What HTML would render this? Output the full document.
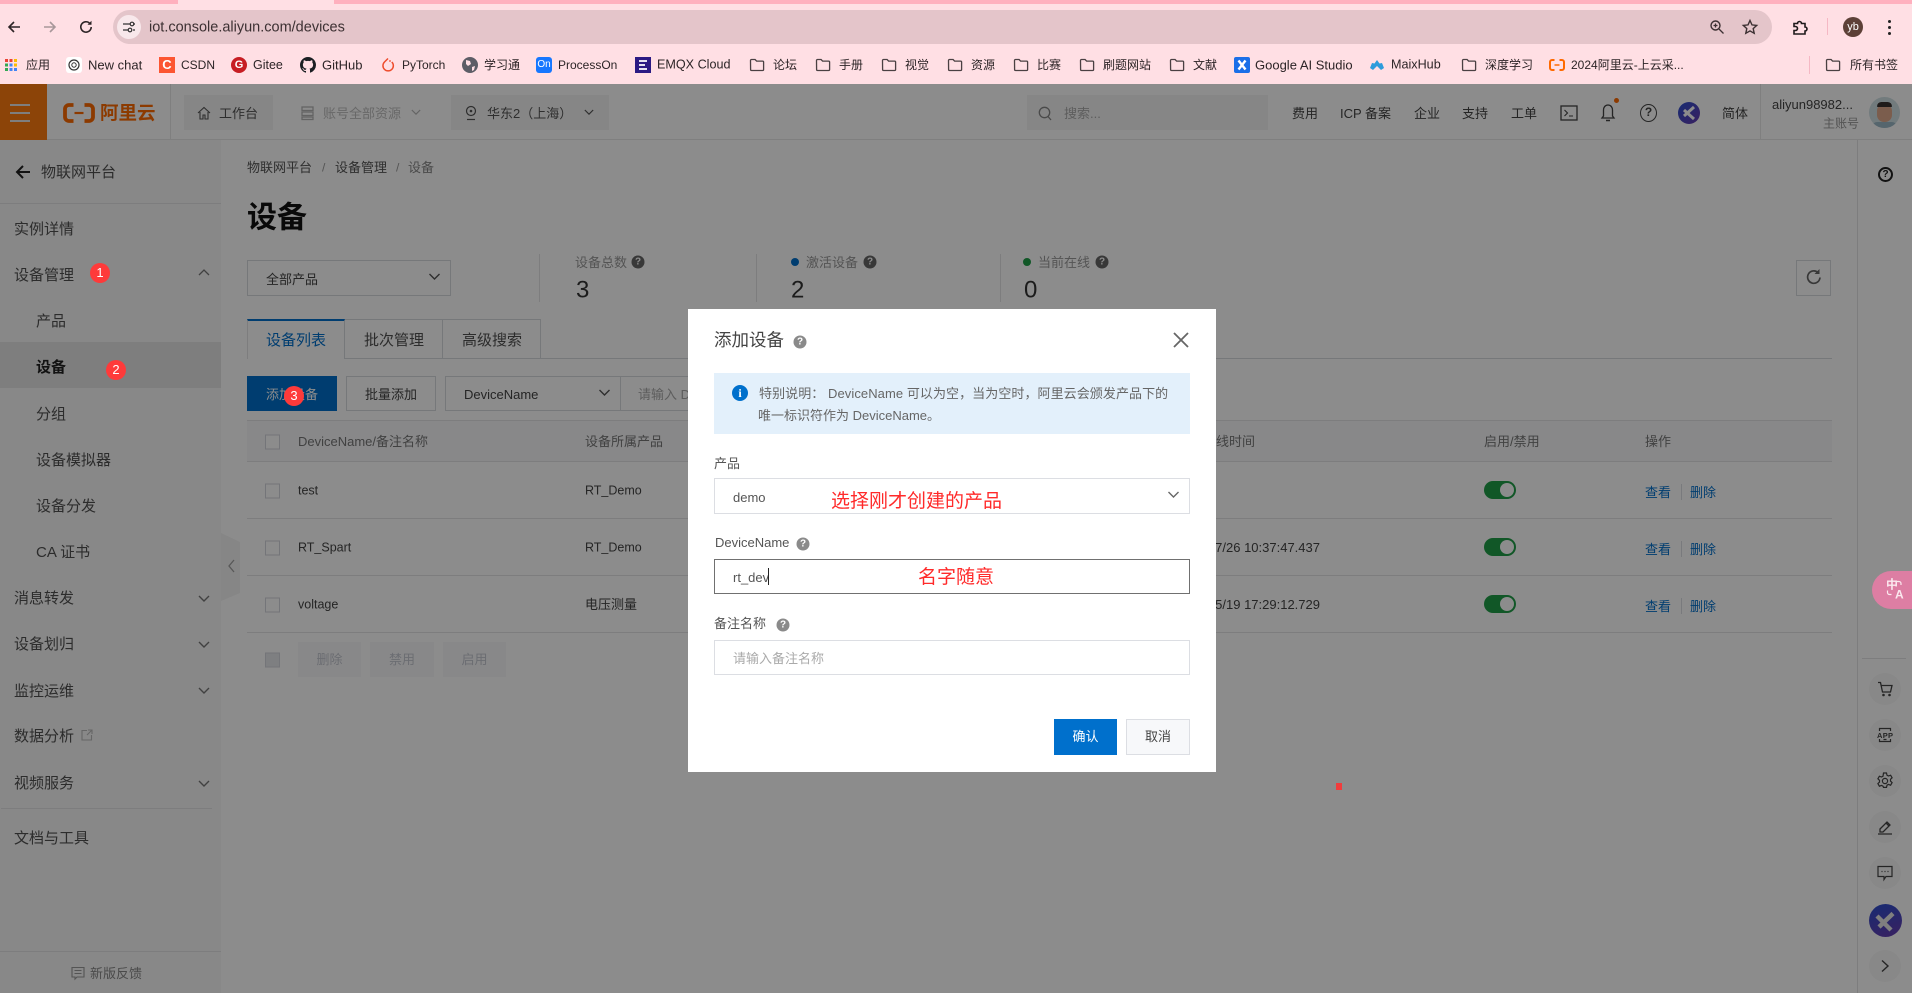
<!DOCTYPE html>
<html lang="zh-CN">
<head>
<meta charset="utf-8">
<title>设备</title>
<style>
html,body{margin:0;padding:0;width:1912px;height:993px;overflow:hidden;background:#fff}
body{position:relative;font-family:"Liberation Sans","Noto Sans CJK SC",sans-serif;font-size:13px;color:#333}
.a{position:absolute;box-sizing:border-box}
.t{position:absolute;white-space:nowrap;line-height:1;transform:translateY(calc(-50% + .5px))}
svg{position:absolute;display:block;overflow:visible}
.bm{font-size:12px;color:#2c2426;transform:translateY(-50%)}
.s{font-size:15px;color:#505050}
.h{font-size:13px;color:#444}
.q{position:absolute;width:13px;height:13px;border-radius:50%;background:#8a8a8a;color:#fff;font-size:10px;font-weight:bold;line-height:13px;text-align:center;transform:translate(-50%,-50%)}
.badge{position:absolute;width:20px;height:20px;border-radius:50%;background:#fe3a3a;color:#fff;font-size:13px;line-height:20px;text-align:center;transform:translate(-50%,-50%);z-index:5}
.cb{position:absolute;left:265px;width:15px;height:15px;border:1px solid #d4d6dc;background:#fff;box-sizing:border-box;transform:translateY(-50%)}
.sw{position:absolute;left:1484px;width:32px;height:18px;border-radius:9px;background:#1f9e48;transform:translateY(-50%)}
.sw i{position:absolute;right:2px;top:2px;width:14px;height:14px;border-radius:50%;background:#fff}
.line{position:absolute;left:247px;width:1585px;height:1px;background:#e3e4e6}
.link{color:#0070cc;font-size:13px}
.rc{position:absolute;left:1869px;width:32px;height:32px;border-radius:50%;background:#f8f8f8}
.dis{position:absolute;top:642px;height:35px;background:#f7f8fa;color:#c4c6cf;text-align:center;line-height:35px;font-size:13px}
</style>
</head>
<body>
<svg width="0" height="0" style="position:absolute"><defs>
<symbol id="folder" viewBox="0 0 16 16"><path d="M1.500 3.500a1 1 0 0 1 1-1h3.600l1.500 1.600h6a1 1 0 0 1 1 1v7.400a1 1 0 0 1-1 1h-11a1 1 0 0 1-1-1z" fill="none" stroke="#4a4042" stroke-width="1.300"/></symbol>
<symbol id="chev" viewBox="0 0 12 8"><path d="M1 1l5 5 5-5" fill="none" stroke="currentColor" stroke-width="1.400"/></symbol>
</defs></svg>

<!-- Chrome tab strip -->
<div class="a" style="left:0;top:0;width:1912px;height:4px;background:#ffb0be"></div>
<div class="a" style="left:178px;top:0;width:156px;height:4px;background:#ffdfe4"></div>
<div class="a" style="left:0;top:4px;width:1912px;height:80px;background:#ffdfe4"></div>
<div class="a" style="left:113px;top:10px;width:1659px;height:34px;border-radius:17px;background:#e4c5ca"></div>
<svg style="left:6px;top:19px" width="16" height="16" viewBox="0 0 16 16"><path d="M14 8H3M8 3L3 8l5 5" fill="none" stroke="#2d2426" stroke-width="1.600"/></svg>
<svg style="left:42px;top:19px" width="16" height="16" viewBox="0 0 16 16"><path d="M2 8h11M8 3l5 5-5 5" fill="none" stroke="#a8979a" stroke-width="1.600"/></svg>
<svg style="left:78px;top:19px" width="16" height="16" viewBox="0 0 16 16"><path d="M13.200 8a5.200 5.200 0 1 1-1.600-3.800" fill="none" stroke="#2d2426" stroke-width="1.600"/><path d="M13.500 1.800v4h-4z" fill="#2d2426"/></svg>
<div class="a" style="left:117px;top:15px;width:24px;height:24px;border-radius:50%;background:#f8e8eb"></div>
<svg style="left:122px;top:20px" width="14" height="14" viewBox="0 0 14 14"><path d="M1 4h7M11 10h2M1 10h5M12 4h1" stroke="#333" stroke-width="1.300" fill="none"/><circle cx="10" cy="4" r="1.800" fill="none" stroke="#333" stroke-width="1.200"/><circle cx="8" cy="10" r="1.800" fill="none" stroke="#333" stroke-width="1.200"/></svg>
<div class="t" style="left:149px;top:27px;font-size:14.500px;color:#3c3032">iot.console.aliyun.com/devices</div>
<svg style="left:1709px;top:19px" width="16" height="16" viewBox="0 0 16 16"><circle cx="6.500" cy="6.500" r="4.500" fill="none" stroke="#3c3032" stroke-width="1.400"/><path d="M10 10l4.500 4.500M4.500 6.500h4M6.500 4.500v4" stroke="#3c3032" stroke-width="1.300" fill="none"/></svg>
<svg style="left:1742px;top:19px" width="16" height="16" viewBox="0 0 16 16"><path d="M8 1.500l2 4.400 4.700.5-3.500 3.200 1 4.700L8 11.900l-4.200 2.400 1-4.700L1.300 6.400 6 5.900z" fill="none" stroke="#3c3032" stroke-width="1.400"/></svg>
<svg style="left:1792px;top:19px" width="16" height="16" viewBox="0 0 16 16"><path d="M2 4.500h3.500a2 2 0 0 1 4 0H13v3.500a2 2 0 0 1 0 4V15H2v-3.500h1.500a2 2 0 0 0 0-4H2z" fill="none" stroke="#1f1a1b" stroke-width="1.600"/></svg>
<div class="a" style="left:1827px;top:18px;width:1px;height:17px;background:#f5b8c4"></div>
<div class="a" style="left:1843px;top:17px;width:20px;height:20px;border-radius:50%;background:#5d4037;color:#fff;font-size:11px;line-height:20px;text-align:center">yb</div>
<div class="a" style="left:1888px;top:20px;width:3px;height:3px;border-radius:50%;background:#222"></div>
<div class="a" style="left:1888px;top:26px;width:3px;height:3px;border-radius:50%;background:#222"></div>
<div class="a" style="left:1888px;top:32px;width:3px;height:3px;border-radius:50%;background:#222"></div>

<!-- Bookmarks -->
<svg style="left:5px;top:59px" width="12" height="12" viewBox="0 0 12 12"><g><rect width="3" height="3" fill="#ea4335"/><rect x="4.500" width="3" height="3" fill="#ea4335"/><rect x="9" width="3" height="3" fill="#fbbc04"/><rect y="4.500" width="3" height="3" fill="#34a853"/><rect x="4.500" y="4.500" width="3" height="3" fill="#4285f4"/><rect x="9" y="4.500" width="3" height="3" fill="#fbbc04"/><rect y="9" width="3" height="3" fill="#34a853"/><rect x="4.500" y="9" width="3" height="3" fill="#4285f4"/><rect x="9" y="9" width="3" height="3" fill="#4285f4"/></g></svg>
<div class="t bm" style="left:26px;top:65px">应用</div>
<div class="a" style="left:66px;top:57px;width:16px;height:16px;background:#fff;border-radius:3px"></div>
<svg style="left:68px;top:59px" width="12" height="12" viewBox="0 0 12 12"><circle cx="6" cy="6" r="5" fill="none" stroke="#333" stroke-width="1.200"/><circle cx="6" cy="6" r="2.200" fill="none" stroke="#333" stroke-width="1"/></svg>
<div class="t bm" style="left:88px;top:65px;font-size:13px">New chat</div>
<div class="a" style="left:159px;top:57px;width:16px;height:16px;background:#fc5531;color:#fff;font-size:13px;font-weight:bold;line-height:16px;text-align:center">C</div>
<div class="t bm" style="left:181px;top:65px">CSDN</div>
<div class="a" style="left:231px;top:57px;width:16px;height:16px;border-radius:50%;background:#c71d23;color:#fff;font-size:11px;font-weight:bold;line-height:16px;text-align:center">G</div>
<div class="t bm" style="left:253px;top:65px;font-size:12.500px">Gitee</div>
<svg style="left:300px;top:57px" width="16" height="16" viewBox="0 0 16 16"><path fill="#1b1f23" d="M8 0C3.580 0 0 3.580 0 8c0 3.540 2.290 6.530 5.470 7.590.4.070.55-.17.55-.38v-1.340c-2.230.48-2.700-1.080-2.700-1.080-.36-.92-.89-1.170-.89-1.170-.73-.5.050-.49.05-.49.8.060 1.220.82 1.220.82.71 1.220 1.870.87 2.330.66.070-.52.280-.87.510-1.070-1.780-.2-3.640-.89-3.640-3.950 0-.87.310-1.590.820-2.150-.08-.2-.36-1.020.08-2.120 0 0 .67-.21 2.200.82a7.600 7.600 0 0 1 4 0c1.530-1.040 2.200-.82 2.200-.82.440 1.100.16 1.920.08 2.120.51.560.82 1.270.82 2.150 0 3.070-1.870 3.750-3.650 3.950.29.250.54.730.54 1.480v2.200c0 .21.150.46.550.38A8 8 0 0 0 16 8c0-4.420-3.580-8-8-8z"/></svg>
<div class="t bm" style="left:322px;top:65px;font-size:13px">GitHub</div>
<svg style="left:380px;top:57px" width="16" height="16" viewBox="0 0 16 16"><path d="M8 1.500L4.500 5a5.200 5.200 0 1 0 7.300 0" fill="none" stroke="#ee4c2c" stroke-width="1.500"/><circle cx="10" cy="4" r=".9" fill="#ee4c2c"/></svg>
<div class="t bm" style="left:402px;top:65px">PyTorch</div>
<div class="a" style="left:462px;top:57px;width:16px;height:16px;border-radius:50%;background:#5d5d66"></div>
<svg style="left:462px;top:57px" width="16" height="16" viewBox="0 0 16 16"><path d="M4 3l4 1 1 3-3 2-2-2zM10 10l3-1-1 4-2 1z" fill="#ffdfe4"/></svg>
<div class="t bm" style="left:484px;top:65px">学习通</div>
<div class="a" style="left:536px;top:57px;width:16px;height:16px;border-radius:3px;background:#1677ff;color:#fff;font-size:10px;line-height:16px;text-align:center">On</div>
<div class="t bm" style="left:558px;top:65px">ProcessOn</div>
<div class="a" style="left:635px;top:57px;width:16px;height:16px;background:#2b1a83"></div>
<svg style="left:635px;top:57px" width="16" height="16" viewBox="0 0 16 16"><path d="M4 4h8M4 8h6M4 12h8" stroke="#fff" stroke-width="1.800"/></svg>
<div class="t bm" style="left:657px;top:65px;font-size:12.600px">EMQX Cloud</div>
<svg style="left:749px;top:57px" width="16" height="16"><use href="#folder"/></svg><div class="t bm" style="left:773px;top:65px">论坛</div>
<svg style="left:815px;top:57px" width="16" height="16"><use href="#folder"/></svg><div class="t bm" style="left:839px;top:65px">手册</div>
<svg style="left:881px;top:57px" width="16" height="16"><use href="#folder"/></svg><div class="t bm" style="left:905px;top:65px">视觉</div>
<svg style="left:947px;top:57px" width="16" height="16"><use href="#folder"/></svg><div class="t bm" style="left:971px;top:65px">资源</div>
<svg style="left:1013px;top:57px" width="16" height="16"><use href="#folder"/></svg><div class="t bm" style="left:1037px;top:65px">比赛</div>
<svg style="left:1079px;top:57px" width="16" height="16"><use href="#folder"/></svg><div class="t bm" style="left:1103px;top:65px">刷题网站</div>
<svg style="left:1169px;top:57px" width="16" height="16"><use href="#folder"/></svg><div class="t bm" style="left:1193px;top:65px">文献</div>
<div class="a" style="left:1234px;top:57px;width:16px;height:16px;border-radius:2px;background:#1a6fe8"></div>
<svg style="left:1234px;top:57px" width="16" height="16" viewBox="0 0 16 16"><path d="M4.500 3.500l7 9M11.500 3.500l-7 9" stroke="#fff" stroke-width="2.400"/></svg>
<div class="t bm" style="left:1255px;top:65px;font-size:13px">Google AI Studio</div>
<svg style="left:1369px;top:57px" width="16" height="16" viewBox="0 0 16 16"><path d="M8 3l2.500 3.500L13 6l2 5-3 2-4-4-4 4-3-2 2-5 2.500.5z" fill="#2d9cdb"/></svg>
<div class="t bm" style="left:1391px;top:65px;font-size:12.600px">MaixHub</div>
<svg style="left:1461px;top:57px" width="16" height="16"><use href="#folder"/></svg><div class="t bm" style="left:1485px;top:65px">深度学习</div>
<svg style="left:1549px;top:57px" width="16" height="16" viewBox="0 0 16 16"><path d="M5.500 3H3a2 2 0 0 0-2 2v6a2 2 0 0 0 2 2h2.500M10.500 3H13a2 2 0 0 1 2 2v6a2 2 0 0 1-2 2h-2.500" fill="none" stroke="#ff6a00" stroke-width="2"/><path d="M5.500 8h5" stroke="#ff6a00" stroke-width="1.500"/></svg>
<div class="t bm" style="left:1571px;top:65px">2024阿里云-上云采...</div>
<div class="a" style="left:1809px;top:56px;width:1px;height:18px;background:#f5b8c4"></div>
<svg style="left:1825px;top:57px" width="16" height="16"><use href="#folder"/></svg><div class="t bm" style="left:1850px;top:65px">所有书签</div>

<!-- Console header -->
<div class="a" style="left:0;top:84px;width:1912px;height:56px;background:#fff;border-bottom:1px solid #e8e8e8"></div>
<div class="a" style="left:0;top:84px;width:47px;height:56px;background:#ff7d0f"></div>
<div class="a" style="left:10px;top:104px;width:20px;height:2px;background:#e6e6e6"></div>
<div class="a" style="left:10px;top:112px;width:20px;height:2px;background:#e6e6e6"></div>
<div class="a" style="left:10px;top:120px;width:20px;height:2px;background:#e6e6e6"></div>
<svg style="left:63px;top:103px" width="32" height="20" viewBox="0 0 32 20"><path d="M10.500 2H6a4 4 0 0 0-4 4v8a4 4 0 0 0 4 4h4.500M21.500 2H26a4 4 0 0 1 4 4v8a4 4 0 0 1-4 4h-4.500" fill="none" stroke="#ff6a00" stroke-width="3.800"/><path d="M11.500 10h9" stroke="#ff6a00" stroke-width="2.200"/></svg>
<div class="t" style="left:100px;top:113px;font-size:18.500px;font-weight:bold;color:#ff6a00">阿里云</div>
<div class="a" style="left:170px;top:84px;width:1px;height:56px;background:#e8e8e8"></div>
<div class="a" style="left:184px;top:95px;width:89px;height:35px;background:#f4f4f4"></div>
<svg style="left:197px;top:106px" width="14" height="14" viewBox="0 0 14 14"><path d="M1 7l6-5.500L13 7M3 6v7h3V9h2v4h3V6" fill="none" stroke="#555" stroke-width="1.100"/></svg>
<div class="t h" style="left:219px;top:113px;color:#555">工作台</div>
<svg style="left:301px;top:105px" width="13" height="16" viewBox="0 0 13 16"><path d="M1 2h11v3.500H1zM1 7h11v3.500H1zM1 12h11v2.500H1z" fill="none" stroke="#b5b5b5" stroke-width="1.300"/></svg>
<div class="t h" style="left:323px;top:113px;color:#bdbdbd">账号全部资源</div>
<svg style="left:411px;top:109px;color:#b5b5b5" width="10" height="7"><use href="#chev"/></svg>
<div class="a" style="left:451px;top:95px;width:158px;height:35px;background:#f4f4f4"></div>
<svg style="left:465px;top:105px" width="12" height="16" viewBox="0 0 12 16"><circle cx="6" cy="6" r="4.500" fill="none" stroke="#555" stroke-width="1.200"/><circle cx="6" cy="6" r="1.300" fill="#555"/><path d="M2 14.500h8" stroke="#555" stroke-width="1.200"/></svg>
<div class="t h" style="left:487px;top:113px;color:#555">华东2（上海）</div>
<svg style="left:584px;top:109px;color:#555" width="10" height="7"><use href="#chev"/></svg>
<div class="a" style="left:1027px;top:95px;width:241px;height:35px;background:#f4f4f4"></div>
<svg style="left:1038px;top:106px" width="14" height="15" viewBox="0 0 14 15"><circle cx="6.500" cy="6.500" r="5.200" fill="none" stroke="#888" stroke-width="1.300"/><path d="M10 10.500l3 3.500" stroke="#888" stroke-width="1.300"/></svg>
<div class="t h" style="left:1064px;top:113px;color:#aaa">搜索...</div>
<div class="t h" style="left:1292px;top:113px">费用</div>
<div class="t h" style="left:1340px;top:113px">ICP 备案</div>
<div class="t h" style="left:1414px;top:113px">企业</div>
<div class="t h" style="left:1462px;top:113px">支持</div>
<div class="t h" style="left:1511px;top:113px">工单</div>
<svg style="left:1560px;top:104px" width="18" height="18" viewBox="0 0 18 18"><rect x="1" y="2" width="16" height="14" fill="none" stroke="#444" stroke-width="1.300"/><path d="M4.500 6l3 3-3 3M9 12h4" fill="none" stroke="#444" stroke-width="1.100"/></svg>
<svg style="left:1600px;top:103px" width="16" height="20" viewBox="0 0 16 20"><path d="M8 2c-3 0-4.500 2.500-4.500 5v6L2 15h12l-1.500-2V7C12.500 4.500 11 2 8 2z" fill="none" stroke="#444" stroke-width="1.300"/><path d="M6 17.500h4" stroke="#444" stroke-width="1.500"/></svg>
<div class="a" style="left:1614px;top:98px;width:5px;height:5px;border-radius:50%;background:#ff6a00"></div>
<div class="a" style="left:1640px;top:104px;width:17px;height:18px;border-radius:50%;border:1.500px solid #444;color:#444;font-size:12px;font-weight:bold;line-height:15px;text-align:center">?</div>
<div class="a" style="left:1678px;top:102px;width:22px;height:22px;border-radius:50%;background:linear-gradient(135deg,#2a4fd0,#6a3db0)"></div>
<svg style="left:1678px;top:102px" width="22" height="22" viewBox="0 0 22 22"><path d="M16 5L6 14M6 8l10 9" stroke="#fff" stroke-width="3"/></svg>
<div class="t h" style="left:1722px;top:113px">简体</div>
<div class="a" style="left:1760px;top:84px;width:1px;height:56px;background:#e8e8e8"></div>
<div class="t" style="left:1772px;top:104px;font-size:13px;color:#444">aliyun98982...</div>
<div class="t" style="left:1823px;top:123px;font-size:12px;color:#999">主账号</div>
<div class="a" style="left:1869px;top:97px;width:31px;height:31px;border-radius:50%;background:#d0e0e4;overflow:hidden"><div class="a" style="left:8px;top:7px;width:15px;height:18px;border-radius:7px;background:#e0aa8c"></div><div class="a" style="left:8px;top:5px;width:15px;height:5px;border-radius:6px 6px 1px 1px;background:#3a3230"></div><div class="a" style="left:3px;top:25px;width:25px;height:10px;border-radius:6px;background:#9cb8c6"></div></div>

<!-- Sidebar -->
<div class="a" style="left:0;top:140px;width:221px;height:853px;background:#f7f7f7"></div>
<div class="a" style="left:0;top:203px;width:221px;height:1px;background:#e3e4e6"></div>
<svg style="left:15px;top:164px" width="16" height="16" viewBox="0 0 16 16"><path d="M15 8H2M8 2L2 8l6 6" fill="none" stroke="#222" stroke-width="2"/></svg>
<div class="t s" style="left:41px;top:172px">物联网平台</div>
<div class="t s" style="left:14px;top:229px">实例详情</div>
<div class="t s" style="left:14px;top:275px">设备管理</div>
<div class="badge" style="left:100px;top:273px">1</div>
<svg style="left:197px;top:268px;color:#777" width="14" height="8" viewBox="0 0 12 8"><path d="M1 7l5-5 5 5" fill="none" stroke="currentColor" stroke-width="1.300"/></svg>
<div class="t s" style="left:36px;top:321px">产品</div>
<div class="a" style="left:0;top:342px;width:221px;height:46px;background:#e6e6e6"></div>
<div class="t s" style="left:36px;top:367px;font-weight:bold;color:#222">设备</div>
<div class="badge" style="left:116px;top:370px">2</div>
<div class="t s" style="left:36px;top:414px">分组</div>
<div class="t s" style="left:36px;top:460px">设备模拟器</div>
<div class="t s" style="left:36px;top:506px">设备分发</div>
<div class="t s" style="left:36px;top:552px">CA 证书</div>
<div class="t s" style="left:14px;top:598px">消息转发</div>
<svg style="left:197px;top:595px;color:#777" width="14" height="8"><use href="#chev"/></svg>
<div class="t s" style="left:14px;top:644px">设备划归</div>
<svg style="left:197px;top:641px;color:#777" width="14" height="8"><use href="#chev"/></svg>
<div class="t s" style="left:14px;top:691px">监控运维</div>
<svg style="left:197px;top:687px;color:#777" width="14" height="8"><use href="#chev"/></svg>
<div class="t s" style="left:14px;top:736px">数据分析</div>
<svg style="left:81px;top:729px" width="12" height="12" viewBox="0 0 12 12"><path d="M6 1.500H1v9.500h9.500V6M7 1h4v4M11 1L6 6" fill="none" stroke="#bbb" stroke-width="1.100"/></svg>
<div class="t s" style="left:14px;top:783px">视频服务</div>
<svg style="left:197px;top:780px;color:#777" width="14" height="8"><use href="#chev"/></svg>
<div class="a" style="left:1px;top:808px;width:211px;height:1px;background:#e3e4e6"></div>
<div class="t s" style="left:14px;top:838px">文档与工具</div>
<div class="a" style="left:0;top:951px;width:221px;height:1px;background:#e3e4e6"></div>
<svg style="left:71px;top:966px" width="14" height="14" viewBox="0 0 14 14"><path d="M1 1.500h12v9.500H6L4 13v-2H1zM3.500 4.500h7M3.500 7.500h7" fill="none" stroke="#999" stroke-width="1.100"/></svg>
<div class="t" style="left:90px;top:973px;font-size:13px;color:#888">新版反馈</div>
<svg style="left:221px;top:533px" width="20" height="70" viewBox="0 0 20 70"><path d="M0 0L19 9V60L0 68z" fill="#f4f4f4"/><path d="M13 27l-5 6 5 6" fill="none" stroke="#a0a0a0" stroke-width="1.300"/></svg>

<!-- Main content -->
<div class="t" style="left:247px;top:167px;font-size:13px;color:#555">物联网平台</div>
<div class="t" style="left:322px;top:167px;font-size:12px;color:#999">/</div>
<div class="t" style="left:335px;top:167px;font-size:13px;color:#555">设备管理</div>
<div class="t" style="left:396px;top:167px;font-size:12px;color:#999">/</div>
<div class="t" style="left:408px;top:167px;font-size:13px;color:#888">设备</div>
<div class="t" style="left:247px;top:218px;font-size:30px;font-weight:bold;color:#111">设备</div>

<div class="a" style="left:247px;top:260px;width:204px;height:36px;border:1px solid #d8dade"></div>
<div class="t h" style="left:266px;top:279px">全部产品</div>
<svg style="left:428px;top:273px;color:#555" width="13" height="8"><use href="#chev"/></svg>

<div class="a" style="left:539px;top:254px;width:1px;height:48px;background:#e3e4e6"></div>
<div class="t h" style="left:575px;top:262px;color:#999">设备总数</div>
<div class="q" style="left:638px;top:262px;background:#666">?</div>
<div class="t" style="left:576px;top:290px;font-size:24px;color:#333">3</div>
<div class="a" style="left:756px;top:254px;width:1px;height:48px;background:#e3e4e6"></div>
<div class="a" style="left:791px;top:258px;width:8px;height:8px;border-radius:50%;background:#0070cc"></div>
<div class="t h" style="left:806px;top:262px;color:#999">激活设备</div>
<div class="q" style="left:870px;top:262px;background:#666">?</div>
<div class="t" style="left:791px;top:290px;font-size:24px;color:#333">2</div>
<div class="a" style="left:1000px;top:254px;width:1px;height:48px;background:#e3e4e6"></div>
<div class="a" style="left:1023px;top:258px;width:8px;height:8px;border-radius:50%;background:#1f9e48"></div>
<div class="t h" style="left:1038px;top:262px;color:#999">当前在线</div>
<div class="q" style="left:1102px;top:262px;background:#666">?</div>
<div class="t" style="left:1024px;top:290px;font-size:24px;color:#333">0</div>
<div class="a" style="left:1796px;top:260px;width:35px;height:36px;border:1px solid #d8dade"></div>
<svg style="left:1805px;top:268px" width="18" height="18" viewBox="0 0 18 18"><path d="M15 9.500a6.200 6.200 0 1 1-2-5" fill="none" stroke="#666" stroke-width="1.700"/><path d="M14.500 1v5h-5z" fill="#666"/></svg>

<div class="a" style="left:247px;top:358px;width:1585px;height:1px;background:#d8dade"></div>
<div class="a" style="left:247px;top:319px;width:98px;height:40px;background:#fff;border-left:1px solid #e3e4e6;border-right:1px solid #d8dade;border-top:2px solid #0070cc"></div>
<div class="a" style="left:345px;top:319px;width:98px;height:39px;border:1px solid #d8dade;border-left:none;border-bottom:none"></div>
<div class="a" style="left:443px;top:319px;width:98px;height:39px;border:1px solid #d8dade;border-left:none;border-bottom:none"></div>
<div class="t" style="left:266px;top:340px;font-size:15px;color:#0070cc">设备列表</div>
<div class="t s" style="left:364px;top:340px">批次管理</div>
<div class="t s" style="left:462px;top:340px">高级搜索</div>

<div class="a" style="left:247px;top:376px;width:90px;height:35px;background:#0070cc"></div>
<div class="t h" style="left:266px;top:394px;color:#fff">添加设备</div>
<div class="badge" style="left:294px;top:396px">3</div>
<div class="a" style="left:346px;top:376px;width:90px;height:35px;border:1px solid #d8dade"></div>
<div class="t h" style="left:365px;top:394px">批量添加</div>
<div class="a" style="left:445px;top:376px;width:176px;height:35px;border:1px solid #d8dade"></div>
<div class="t h" style="left:464px;top:394px">DeviceName</div>
<svg style="left:598px;top:389px;color:#555" width="13" height="8"><use href="#chev"/></svg>
<div class="a" style="left:620px;top:376px;width:140px;height:35px;border:1px solid #d8dade"></div>
<div class="t h" style="left:638px;top:394px;color:#aaa">请输入 DeviceName</div>

<div class="a" style="left:247px;top:420px;width:1585px;height:42px;background:#f7f8fa;border-top:1px solid #e3e4e6;border-bottom:1px solid #e3e4e6"></div>
<div class="cb" style="top:442px"></div>
<div class="t h" style="left:298px;top:441px;color:#777">DeviceName/备注名称</div>
<div class="t h" style="left:585px;top:441px;color:#777">设备所属产品</div>
<div class="t h" style="left:1216px;top:441px;color:#777">线时间</div>
<div class="t h" style="left:1484px;top:441px;color:#777">启用/禁用</div>
<div class="t h" style="left:1645px;top:441px;color:#777">操作</div>

<div class="line" style="top:518px"></div>
<div class="line" style="top:575px"></div>
<div class="line" style="top:632px"></div>
<div class="cb" style="top:491px"></div>
<div class="cb" style="top:548px"></div>
<div class="cb" style="top:605px"></div>
<div class="t h" style="left:298px;top:490px;font-size:12.500px">test</div>
<div class="t h" style="left:298px;top:547px;font-size:12.500px">RT_Spart</div>
<div class="t h" style="left:298px;top:604px;font-size:12.500px">voltage</div>
<div class="t h" style="left:585px;top:490px;font-size:12.500px">RT_Demo</div>
<div class="t h" style="left:585px;top:547px;font-size:12.500px">RT_Demo</div>
<div class="t h" style="left:585px;top:604px">电压测量</div>
<div class="t h" style="right:592px;top:547px">2024/07/26 10:37:47.437</div>
<div class="t h" style="right:592px;top:604px">2024/05/19 17:29:12.729</div>
<div class="sw" style="top:490px"><i></i></div>
<div class="sw" style="top:547px"><i></i></div>
<div class="sw" style="top:604px"><i></i></div>
<div class="t link" style="left:1645px;top:492px">查看</div><div class="a" style="left:1681px;top:484px;width:1px;height:16px;background:#dcdee3"></div><div class="t link" style="left:1690px;top:492px">删除</div>
<div class="t link" style="left:1645px;top:549px">查看</div><div class="a" style="left:1681px;top:541px;width:1px;height:16px;background:#dcdee3"></div><div class="t link" style="left:1690px;top:549px">删除</div>
<div class="t link" style="left:1645px;top:606px">查看</div><div class="a" style="left:1681px;top:598px;width:1px;height:16px;background:#dcdee3"></div><div class="t link" style="left:1690px;top:606px">删除</div>
<div class="cb" style="top:660px;background:#e6e7eb"></div>
<div class="dis" style="left:298px;width:63px">删除</div>
<div class="dis" style="left:370px;width:64px">禁用</div>
<div class="dis" style="left:443px;width:63px">启用</div>

<!-- Right rail -->
<div class="a" style="left:1857px;top:140px;width:1px;height:853px;background:#e3e4e6"></div>
<div class="a" style="left:1878px;top:167px;width:15px;height:15px;border-radius:50%;border:2px solid #222;color:#222;font-size:10px;font-weight:bold;line-height:11px;text-align:center">?</div>
<div class="a" style="left:1862px;top:658px;width:44px;height:1px;background:#e3e4e6"></div>
<div class="rc" style="top:673px"></div>
<div class="rc" style="top:719px"></div>
<div class="rc" style="top:765px"></div>
<div class="rc" style="top:811px"></div>
<div class="rc" style="top:857px"></div>
<div class="rc" style="top:950px"></div>
<svg style="left:1877px;top:681px" width="16" height="16" viewBox="0 0 16 16"><path d="M1 1.500h2.500L5.500 11h8l1.500-6.500H4.200" fill="none" stroke="#444" stroke-width="1.300"/><circle cx="6.500" cy="14" r="1.300" fill="#444"/><circle cx="12.500" cy="14" r="1.300" fill="#444"/></svg>
<svg style="left:1877px;top:727px" width="16" height="16" viewBox="0 0 16 16"><path d="M2.500 4V1.500h11V4M2.500 12v2.500h11V12M6.500 12.500h3" fill="none" stroke="#444" stroke-width="1.200"/></svg>
<div class="t" style="left:1877px;top:735px;font-size:7.500px;font-weight:bold;color:#444;letter-spacing:.3px">APP</div>
<svg style="left:1876px;top:772px" width="18" height="18" viewBox="0 0 18 18"><path d="M7.500 1h3l.5 2.200 1.500.8 2.100-.8 1.500 2.600-1.600 1.500v1.800l1.600 1.500-1.500 2.600-2.100-.8-1.500.8-.5 2.200h-3L7 14.200l-1.500-.8-2.100.8-1.500-2.600L3.500 10.100V8.300L1.900 6.800l1.500-2.600 2.100.8 1.500-.8z" fill="none" stroke="#444" stroke-width="1.200"/><circle cx="9" cy="9" r="2.600" fill="none" stroke="#444" stroke-width="1.200"/></svg>
<svg style="left:1877px;top:819px" width="16" height="16" viewBox="0 0 16 16"><path d="M3 10l7-7 3 3-7 7H3zM9 4l3 3M1 15h14" fill="none" stroke="#444" stroke-width="1.300"/></svg>
<svg style="left:1877px;top:865px" width="16" height="16" viewBox="0 0 16 16"><path d="M1 1.500h14v10H9l-2 3v-3H1z" fill="none" stroke="#444" stroke-width="1.200"/><path d="M4.500 6.500h1M7.500 6.500h1M10.500 6.500h1" stroke="#444" stroke-width="1.300"/></svg>
<div class="a" style="left:1869px;top:904px;width:33px;height:33px;border-radius:50%;background:linear-gradient(160deg,#2a4fd0,#6a3db0)"></div>
<svg style="left:1869px;top:904px" width="33" height="33" viewBox="0 0 33 33"><path d="M24 9.500L10 23M8 12l14 14" stroke="#e8e8e8" stroke-width="4.400"/></svg>
<svg style="left:1880px;top:959px" width="10" height="14" viewBox="0 0 10 14"><path d="M2 1.500L8 7l-6 5.500" fill="none" stroke="#444" stroke-width="1.400"/></svg>

<!-- Overlay -->
<div class="a" style="left:0;top:84px;width:1912px;height:909px;background:rgba(0,0,0,.45)"></div>

<!-- Floating translator -->
<div class="a" style="left:1872px;top:571px;width:40px;height:38px;border-radius:19px 0 0 19px;background:#dd7ea3"></div>
<div class="t" style="left:1886px;top:584px;font-size:12px;font-weight:bold;color:#fbe9ef">中</div>
<div class="t" style="left:1895px;top:594px;font-size:12px;font-weight:bold;color:#fbe9ef">A</div>
<svg style="left:1886px;top:580px" width="18" height="18" viewBox="0 0 18 18"><path d="M11 1.500h2a2 2 0 0 1 2 2v1.500M1.500 10.500v2a2 2 0 0 0 2 2h2" fill="none" stroke="#fbe9ef" stroke-width="1.200"/></svg>
<div class="a" style="left:1336px;top:783px;width:6px;height:7px;background:#f23c3c"></div>

<!-- Modal -->
<div class="a" style="left:688px;top:309px;width:528px;height:463px;background:#fff"></div>
<div class="t" style="left:714px;top:340px;font-size:17.500px;color:#444">添加设备</div>
<div class="q" style="left:800px;top:342px">?</div>
<svg style="left:1173px;top:332px" width="16" height="16" viewBox="0 0 16 16"><path d="M1 1l14 14M15 1L1 15" stroke="#666" stroke-width="1.800"/></svg>
<div class="a" style="left:714px;top:373px;width:476px;height:61px;background:#e3f0fb"></div>
<div class="a" style="left:732px;top:385px;width:16px;height:16px;border-radius:50%;background:#0070cc;color:#fff;font:bold 12px/16px 'Liberation Serif',serif;text-align:center">i</div>
<div class="t" style="left:759px;top:393px;font-size:13px;color:#666;letter-spacing:.07px">特别说明： DeviceName 可以为空，当为空时，阿里云会颁发产品下的</div>
<div class="t" style="left:758px;top:415px;font-size:13px;color:#666">唯一标识符作为 DeviceName。</div>
<div class="t h" style="left:714px;top:463px;color:#555">产品</div>
<div class="a" style="left:714px;top:478px;width:476px;height:36px;border:1px solid #dcdee3"></div>
<div class="t h" style="left:733px;top:497px;color:#555">demo</div>
<svg style="left:1167px;top:491px;color:#666" width="13" height="8"><use href="#chev"/></svg>
<div class="t" style="left:831px;top:501px;font-size:19px;color:#ff2a2a">选择刚才创建的产品</div>
<div class="t h" style="left:715px;top:542px;color:#555">DeviceName</div>
<div class="q" style="left:803px;top:544px">?</div>
<div class="a" style="left:714px;top:559px;width:476px;height:35px;border:1px solid #707070"></div>
<div class="t h" style="left:733px;top:577px;color:#555">rt_dev</div>
<div class="a" style="left:768px;top:568px;width:1px;height:17px;background:#222"></div>
<div class="t" style="left:918px;top:577px;font-size:19px;color:#ff2a2a">名字随意</div>
<div class="t h" style="left:714px;top:623px;color:#555">备注名称</div>
<div class="q" style="left:783px;top:625px">?</div>
<div class="a" style="left:714px;top:640px;width:476px;height:35px;border:1px solid #dcdee3"></div>
<div class="t h" style="left:733px;top:658px;color:#aaa">请输入备注名称</div>
<div class="a" style="left:1054px;top:719px;width:63px;height:36px;background:#0070cc;color:#fff;font-size:13px;line-height:36px;text-align:center">确认</div>
<div class="a" style="left:1126px;top:719px;width:64px;height:36px;background:#f7f8fa;border:1px solid #dcdee3;color:#444;font-size:13px;line-height:34px;text-align:center">取消</div>
</body>
</html>
